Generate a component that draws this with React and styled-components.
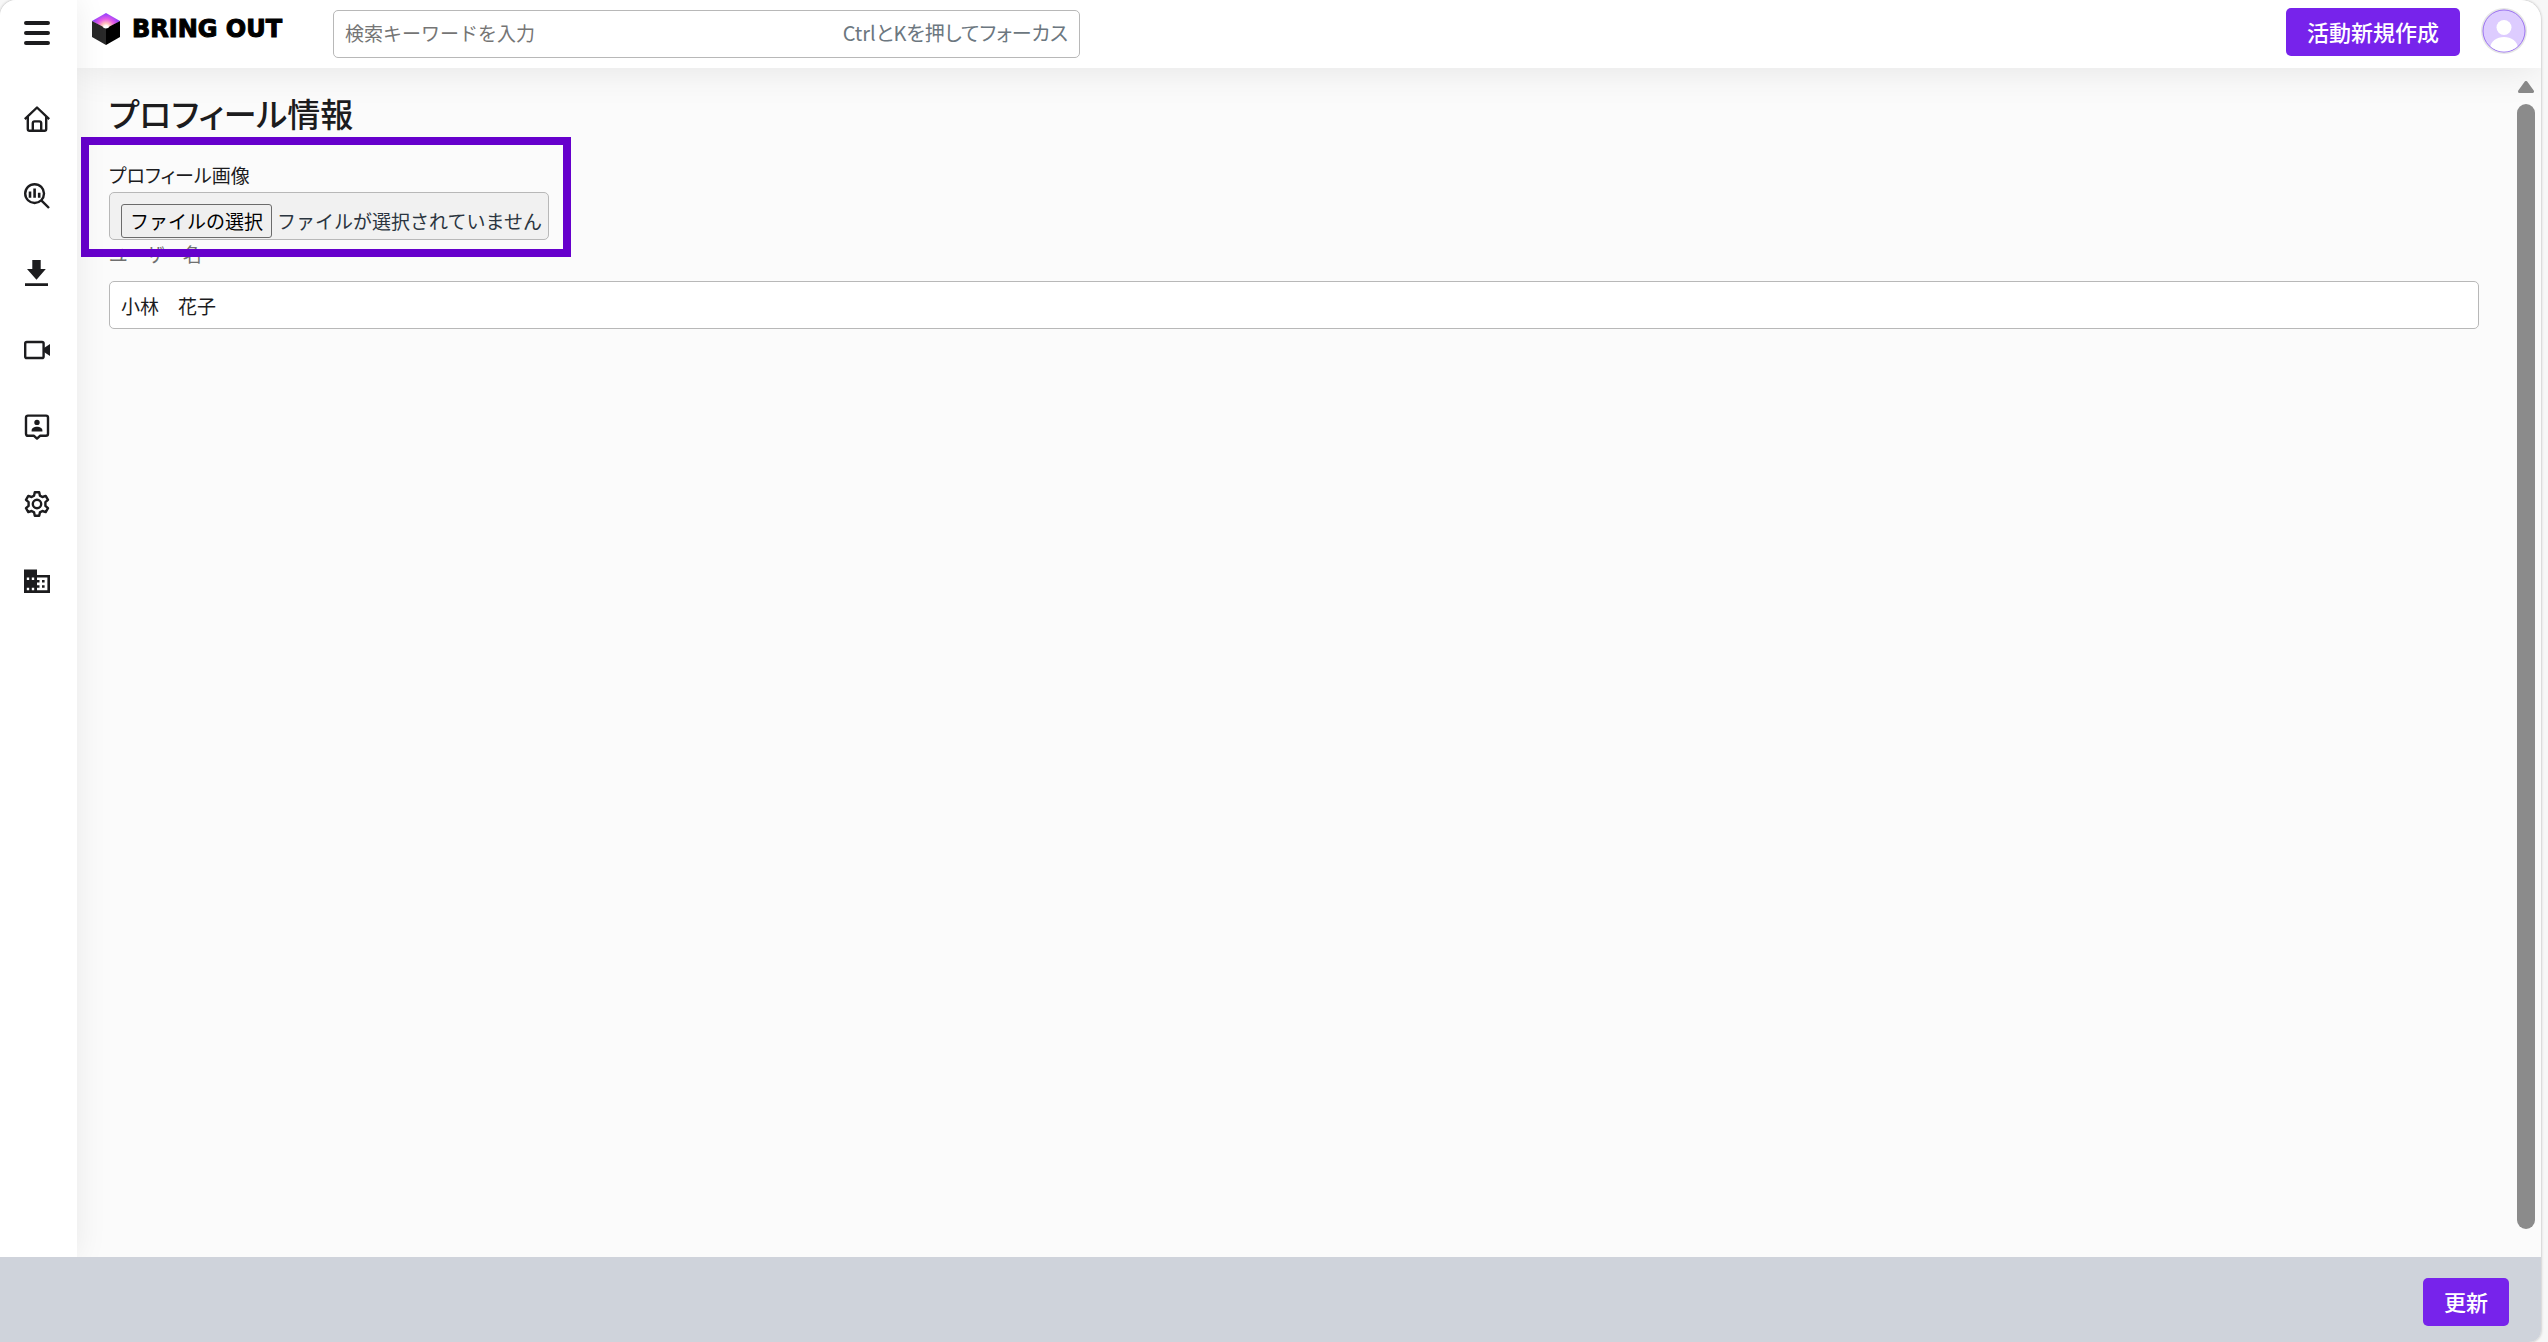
import React, { useRef, useState } from "react";
import styled, { createGlobalStyle } from "styled-components";

const GlobalStyle = createGlobalStyle`
  * {
    box-sizing: border-box;
  }

  body {
    margin: 0;
    background: #f7f7f7;
    color: #1c1c1e;
    font-family: "Noto Sans CJK JP", sans-serif;
    font-size: 19px;
  }

  button,
  input {
    font-family: inherit;
  }
`;

const Shell = styled.div`
  display: flex;
  flex-direction: column;
  min-height: 100vh;
  margin-right: 7px;
  background: #fbfbfb;
  border-radius: 16px 20px 12px 0;
  box-shadow: 0 0 3px rgba(0, 0, 0, 0.3);
  overflow: hidden;
`;

const Body = styled.div`
  display: flex;
  flex: 1;
`;

const Sidebar = styled.nav`
  position: relative;
  z-index: 3;
  display: flex;
  flex-direction: column;
  align-items: center;
  flex: 0 0 77px;
  padding: 12px 3px 0 0;
  background: #fff;
  box-shadow: 0 0 32px rgba(0, 0, 0, 0.08);
`;

const MenuButton = styled.button`
  display: flex;
  align-items: center;
  justify-content: center;
  width: 42px;
  height: 42px;
  margin-bottom: 26px;
  padding: 0;
  color: #1c1c1e;
  background: none;
  border: none;
`;

const NavLink = styled.a`
  display: flex;
  align-items: center;
  justify-content: center;
  width: 74px;
  height: 77px;
  color: #1c1c1e;
`;

const Content = styled.div`
  display: flex;
  flex-direction: column;
  flex: 1;
  min-width: 0;
`;

const Header = styled.header`
  position: relative;
  z-index: 2;
  display: flex;
  align-items: flex-start;
  height: 68px;
  padding: 8px 14px 0 15px;
  background: #fff;
  box-shadow: 0 0 40px rgba(0, 0, 0, 0.1);
`;

const Logo = styled.a`
  display: flex;
  align-items: center;
  gap: 12px;
  width: 241px;
  height: 42px;
  color: #000;
  font-family: "DejaVu Sans", sans-serif;
  font-size: 24px;
  font-weight: 700;
  -webkit-text-stroke: 1px #000;
  line-height: 32px;
  text-decoration: none;
  white-space: nowrap;
`;

const SearchBox = styled.label`
  display: flex;
  align-items: center;
  width: 747px;
  height: 48px;
  margin-top: 2px;
  padding: 0 11px 2px;
  background: #fff;
  border: 1px solid #b8b8b8;
  border-radius: 5px;
`;

const SearchInput = styled.input`
  flex: 1;
  min-width: 0;
  padding: 0;
  font-size: 19px;
  line-height: 28px;
  background: none;
  border: none;
  outline: none;

  &::placeholder {
    color: #757575;
  }
`;

const SearchHint = styled.span`
  color: #6c7780;
  font-size: 20px;
  line-height: 28px;
  font-feature-settings: "palt";
`;

const PrimaryButton = styled.button`
  height: 48px;
  padding: 0 21px 2px;
  color: #fff;
  font-size: 22px;
  font-weight: 500;
  line-height: 28px;
  background: #7723eb;
  border: none;
  border-radius: 5px;
`;

const HeaderActions = styled.div`
  display: flex;
  gap: 21px;
  margin-left: auto;
`;

const AvatarButton = styled.button`
  width: 46px;
  height: 46px;
  padding: 0;
  background: none;
  border: none;
`;

const Scroller = styled.div`
  display: flex;
  flex: 1;
  padding-right: 6px;
`;

const Form = styled.form`
  flex: 1;
  padding: 21px 38px 0 32px;
`;

const Title = styled.h1`
  margin: 0 0 24px;
  font-size: 33px;
  font-weight: 500;
  line-height: 48px;
  font-feature-settings: "palt";
`;

const Field = styled.div`
  display: flex;
  flex-direction: column;
  gap: ${({ $gap }) => $gap}px;
`;

const HighlightedField = styled(Field)`
  position: relative;
  width: fit-content;

  &::after {
    content: "";
    position: absolute;
    inset: -24px -22px -17px -28px;
    border: 8px solid #6600cc;
    pointer-events: none;
  }
`;

const FieldLabel = styled.label`
  color: ${({ $muted }) => ($muted ? "#6f6f6f" : "#1c1c1e")};
  font-size: 19px;
  line-height: 28px;
  font-feature-settings: "palt";
`;

const FilePicker = styled.div`
  display: flex;
  gap: 5px;
  height: 48px;
  padding: 11px 8px 0 11px;
  color: #2b3540;
  background: #f1f1f1;
  border: 1px solid #b8b8b8;
  border-radius: 5px;
  line-height: 34px;
`;

const FileButton = styled.button`
  height: 34px;
  padding: 0 8px;
  color: #000;
  font-size: 19px;
  line-height: 32px;
  background: #efefef;
  border: 1px solid #6b6b6b;
  border-radius: 3px;
`;

const FileStatus = styled.span`
  margin-right: -2px;
`;

const TextInput = styled.input`
  height: 48px;
  padding: 0 11px;
  color: #1c1c1e;
  font-size: 19px;
  background: #fff;
  border: 1px solid #b8b8b8;
  border-radius: 5px;
`;

const ScrollTrack = styled.div`
  display: flex;
  flex-direction: column;
  align-items: center;
  gap: 11px;
  width: 18px;
  padding: 13px 0 28px;
`;

const ScrollThumb = styled.div`
  flex: 1;
  width: 18px;
  background: #8b8b8b;
  border-radius: 9px;
`;

const Footer = styled.footer`
  position: relative;
  z-index: 4;
  display: flex;
  justify-content: flex-end;
  height: 85px;
  padding: 21px 32px 0;
  background: #cfd3db;
`;

function CubeMark() {
  return (
    <svg width="28" height="32" viewBox="0 0 28 32" aria-hidden="true">
      <defs>
        <radialGradient id="glow" cx="14" cy="15" r="15" gradientUnits="userSpaceOnUse">
          <stop offset="0.15" stopColor="#fff" />
          <stop offset="0.32" stopColor="#ffc0bd" />
          <stop offset="0.6" stopColor="#e75ce6" />
          <stop offset="1" stopColor="#8b3dff" />
        </radialGradient>
      </defs>
      <path d="M14 0L28 8L14 16L0 8Z" fill="url(#glow)" />
      <path d="M0 8L10.5 13.5Q11.5 15.5 14 15.5V32L0 24Z" fill="#292929" />
      <path d="M28 8L17.5 13.5Q16.5 15.5 14 15.5V32L28 24Z" fill="#000" />
    </svg>
  );
}

function Icon({ children }) {
  return (
    <svg
      width="26"
      height="26"
      viewBox="0 0 26 26"
      fill="none"
      stroke="currentColor"
      strokeWidth="2.4"
      strokeLinejoin="round"
      aria-hidden="true"
    >
      {children}
    </svg>
  );
}

const navItems = [
  {
    label: "ホーム",
    icon: (
      <>
        <path d="M0.8 13.2L13 1.5L25.2 13.2" />
        <path d="M3.8 11V23Q3.8 24.8 5.6 24.8H20.4Q22.2 24.8 22.2 23V11" />
        <path d="M8.8 24.5V17.2Q8.8 15.4 10.6 15.4H15.4Q17.2 15.4 17.2 17.2V24.5" />
      </>
    ),
  },
  {
    label: "分析",
    icon: (
      <>
        <circle cx="10.6" cy="10.6" r="9.4" />
        <path d="M17.3 17.3L25 25" />
        <path d="M6 8.5V14.8M10.6 5.5V14.8M15.2 9.8V14.8" strokeWidth="2.6" />
      </>
    ),
  },
  {
    label: "ダウンロード",
    icon: (
      <path
        d="M8.3 0H16.7V9H21.8L12.5 19.8L3 9H8.3ZM1 23.2H24V26H1Z"
        fill="currentColor"
        stroke="none"
      />
    ),
  },
  {
    label: "ビデオ",
    icon: (
      <>
        <rect x="1.2" y="5" width="18.4" height="16" rx="1.6" />
        <path d="M20 11L26 7V19L20 15Z" fill="currentColor" stroke="none" />
      </>
    ),
  },
  {
    label: "連絡先",
    icon: (
      <>
        <path d="M4 1.6H22Q24 1.6 24 3.6V19.8Q24 21.8 22 21.8H16L13 24.6L10 21.8H4Q2 21.8 2 19.8V3.6Q2 1.6 4 1.6Z" />
        <circle cx="13" cy="8.4" r="2.7" fill="currentColor" stroke="none" />
        <path
          d="M7.6 17.6V16.4C7.6 11.6 18.4 11.6 18.4 16.4V17.6Z"
          fill="currentColor"
          stroke="none"
        />
      </>
    ),
  },
  {
    label: "設定",
    icon: (
      <>
        <path d="M10.8 1.2H15.2L15.9 4.6L18.4 6L21.7 4.9L24 8.8L21.4 11.1V14.9L24 17.2L21.7 21.1L18.4 20L15.9 21.4L15.2 24.8H10.8L10.1 21.4L7.6 20L4.3 21.1L2 17.2L4.6 14.9V11.1L2 8.8L4.3 4.9L7.6 6L10.1 4.6Z" />
        <circle cx="13" cy="13" r="4.2" />
      </>
    ),
  },
  {
    label: "会社",
    icon: (
      <path
        d="M0 1.5H13V7H26V25H0ZM2.8 9.5V12H5.2V9.5ZM7.8 9.5V12H10.2V9.5ZM2.8 19.7V22.3H5.2V19.7ZM7.8 19.7V22.3H10.2V19.7ZM13 9.5V12H15.5V14.5H13V17.2H15.5V19.7H13V22.3H23.4V9.5ZM18 12H20.6V14.5H18ZM18 17.2H20.6V19.7H18Z"
        fill="currentColor"
        fillRule="evenodd"
        stroke="none"
      />
    ),
  },
];

function Avatar() {
  return (
    <svg width="46" height="46" viewBox="0 0 46 46" aria-hidden="true">
      <defs>
        <clipPath id="avatar-clip">
          <circle cx="23" cy="23" r="20.5" />
        </clipPath>
      </defs>
      <circle cx="23" cy="23" r="23" fill="#e6e6e6" />
      <circle cx="23" cy="23" r="21" fill="#ddccff" stroke="#9b72f2" />
      <g fill="#fff" clipPath="url(#avatar-clip)">
        <circle cx="23" cy="19.5" r="7.5" />
        <path d="M9 41C9 25 37 25 37 41V46H9Z" />
      </g>
    </svg>
  );
}

function App() {
  const fileRef = useRef(null);
  const [fileName, setFileName] = useState("");
  const [userName, setUserName] = useState("小林　花子");

  return (
    <>
      <GlobalStyle />
      <Shell>
        <Body>
          <Sidebar>
            <MenuButton type="button" aria-label="メニュー">
              <svg width="26" height="24" viewBox="0 0 26 24" aria-hidden="true">
                <path
                  d="M2 2H24M2 12H24M2 22H24"
                  stroke="currentColor"
                  strokeWidth="4"
                  strokeLinecap="round"
                />
              </svg>
            </MenuButton>
            {navItems.map(({ label, icon }) => (
              <NavLink key={label} href="#" aria-label={label}>
                <Icon>{icon}</Icon>
              </NavLink>
            ))}
          </Sidebar>

          <Content>
            <Header>
              <Logo href="#">
                <CubeMark />
                BRING OUT
              </Logo>
              <SearchBox>
                <SearchInput
                  type="text"
                  aria-label="検索"
                  placeholder="検索キーワードを入力"
                />
                <SearchHint>CtrlとKを押してフォーカス</SearchHint>
              </SearchBox>
              <HeaderActions>
                <PrimaryButton type="button">活動新規作成</PrimaryButton>
                <AvatarButton type="button" aria-label="アカウント">
                  <Avatar />
                </AvatarButton>
              </HeaderActions>
            </Header>

            <Scroller>
              <Form id="profile" onSubmit={(e) => e.preventDefault()}>
                <Title>プロフィール情報</Title>
                <HighlightedField $gap={3}>
                  <FieldLabel htmlFor="profile-image">プロフィール画像</FieldLabel>
                  <FilePicker>
                    <input
                      ref={fileRef}
                      id="profile-image"
                      type="file"
                      accept="image/*"
                      hidden
                      onChange={(e) => setFileName(e.target.files[0]?.name ?? "")}
                    />
                    <FileButton type="button" onClick={() => fileRef.current.click()}>
                      ファイルの選択
                    </FileButton>
                    <FileStatus>{fileName || "ファイルが選択されていません"}</FileStatus>
                  </FilePicker>
                </HighlightedField>
                <Field $gap={13}>
                  <FieldLabel htmlFor="user-name" $muted>
                    ユーザー名
                  </FieldLabel>
                  <TextInput
                    id="user-name"
                    type="text"
                    value={userName}
                    onChange={(e) => setUserName(e.target.value)}
                  />
                </Field>
              </Form>
              <ScrollTrack aria-hidden="true">
                <svg width="16" height="12" viewBox="0 0 16 12">
                  <path
                    d="M8 1.5L14.5 10.5H1.5Z"
                    fill="#8b8b8b"
                    stroke="#8b8b8b"
                    strokeWidth="3"
                    strokeLinejoin="round"
                  />
                </svg>
                <ScrollThumb />
              </ScrollTrack>
            </Scroller>
          </Content>
        </Body>

        <Footer>
          <PrimaryButton type="submit" form="profile">
            更新
          </PrimaryButton>
        </Footer>
      </Shell>
    </>
  );
}

export default App;
